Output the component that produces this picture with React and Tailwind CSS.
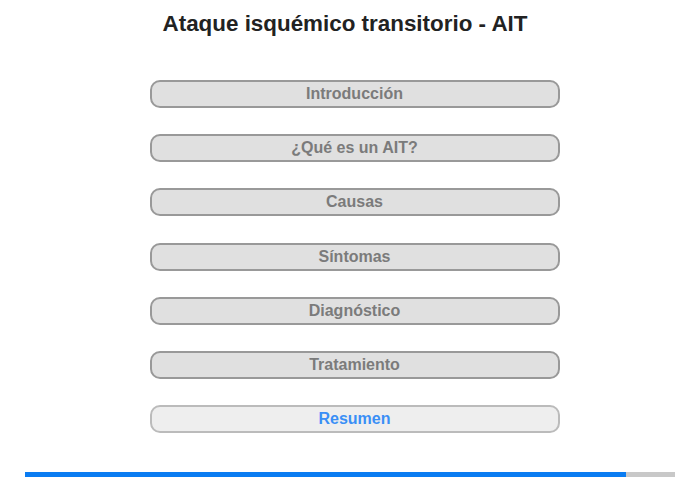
import React from 'react';

const sections = [
  'Introducción',
  '¿Qué es un AIT?',
  'Causas',
  'Síntomas',
  'Diagnóstico',
  'Tratamiento',
];

export default function App() {
  return (
    <div className="relative h-[480px] w-[700px] bg-white font-['Liberation_Sans',Arial,sans-serif]">
      <h1 className="pr-[10px] pt-[11px] text-center text-[22.4px] font-bold leading-[26px] text-[#222]">
        Ataque isquémico transitorio - AIT
      </h1>

      <div className="ml-[9px] mt-[43px] flex flex-col items-center gap-[26.2px]">
        {sections.map((s) => (
          <div
            key={s}
            className="flex h-[28px] w-[410px] items-center justify-center rounded-[10px] border-2 border-[#999] bg-[#e0e0e0] text-[16px] font-bold text-[#7b7b7b]"
          >
            {s}
          </div>
        ))}
        <div className="flex h-[28px] w-[410px] items-center justify-center rounded-[10px] border-2 border-[#bbb] bg-[#eee] text-[16px] font-bold text-[#3a8ff6]">
          Resumen
        </div>
      </div>

      <div className="absolute left-[25px] top-[472px] flex h-[5px] w-[650px] bg-[#c8c8c8]">
        <div className="h-full w-[601px] bg-[#0a7cf2]" />
      </div>
    </div>
  );
}
